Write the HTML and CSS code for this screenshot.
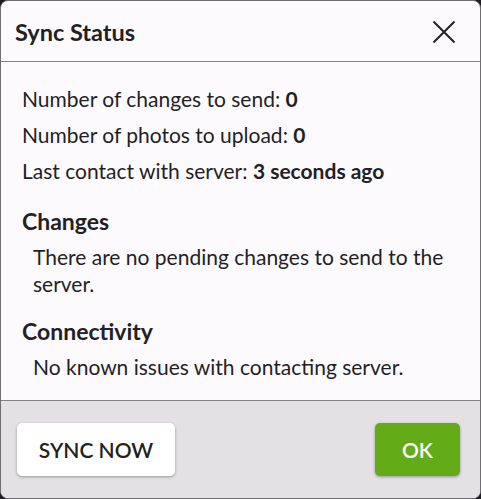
FILE: index.html
```html
<!DOCTYPE html>
<html>
<head>
<meta charset="utf-8">
<link rel="stylesheet" href="styles.css">
</head>
<body>
<div class="dialog">
  <div class="header">
    <h1 class="title">Sync Status</h1>
    <button class="close" aria-label="Close">
      <svg width="24" height="24" viewBox="0 0 24 24"><path d="M1.5 1.5 L22.5 22.5 M22.5 1.5 L1.5 22.5" stroke="#231f24" stroke-width="2" fill="none"/></svg>
    </button>
  </div>
  <div class="content">
    <p class="stat">Number of changes to send: <b>0</b></p>
    <p class="stat">Number of photos to upload: <b>0</b></p>
    <p class="stat">Last contact with server: <b>3 seconds ago</b></p>
    <h2 class="section">Changes</h2>
    <p class="detail">There are no pending changes to send to the server.</p>
    <h2 class="section">Connectivity</h2>
    <p class="detail">No known issues with contacting server.</p>
  </div>
  <div class="footer">
    <button class="btn btn-secondary">SYNC NOW</button>
    <button class="btn btn-primary">OK</button>
  </div>
</div>
</body>
</html>
```
FILE: styles.css
```css
html, body {
  margin: 0;
  padding: 0;
  background: #1d1c21;
}
body {
  font-family: Lato, "Noto Sans", sans-serif;
  color: #231f24;
}
.dialog {
  width: 481px;
  height: 499px;
  box-sizing: border-box;
  border: 1px solid #716e72;
  border-radius: 8px;
  background: #fcfafd;
  display: flex;
  flex-direction: column;
  overflow: hidden;
}
.header {
  height: 61px;
  box-sizing: border-box;
  border-bottom: 1px solid #858286;
  display: flex;
  align-items: center;
  justify-content: space-between;
  padding: 2px 24px 0 14px;
  flex: none;
}
.title {
  margin: 0;
  font-size: 23.5px;
  font-weight: 700;
}
.close {
  border: 0;
  background: none;
  padding: 0;
  width: 24px;
  height: 24px;
  display: flex;
}
.content {
  flex: 1;
  padding: 19px 22px 0 21px;
}
.stat {
  margin: 0;
  font-size: 21px;
  line-height: 36px;
}
.stat b { font-weight: 700; }
.section {
  margin: 18px 0 0 0;
  font-size: 23px;
  font-weight: 700;
  line-height: 28px;
}
.detail + .section {
  margin-top: 20px;
}
.detail {
  margin: 8px 0 0 11px;
  font-size: 21px;
  line-height: 27px;
}
.footer {
  flex: none;
  height: 98px;
  box-sizing: border-box;
  background: #e4e1e4;
  border-top: 1px solid #858286;
  display: flex;
  align-items: center;
  justify-content: space-between;
  padding: 0 20px 0 16px;
}
.btn {
  height: 53px;
  border: 0;
  border-radius: 5px;
  font-family: Lato, "Noto Sans", sans-serif;
  font-size: 21px;
  font-weight: 600;
  box-shadow: 0 1px 3px rgba(0,0,0,0.35);
}
.btn-secondary {
  width: 158px;
  background: #ffffff;
  color: #231f24;
}
.btn-primary {
  width: 85px;
  background: #63ab17;
  color: #ffffff;
}
```
